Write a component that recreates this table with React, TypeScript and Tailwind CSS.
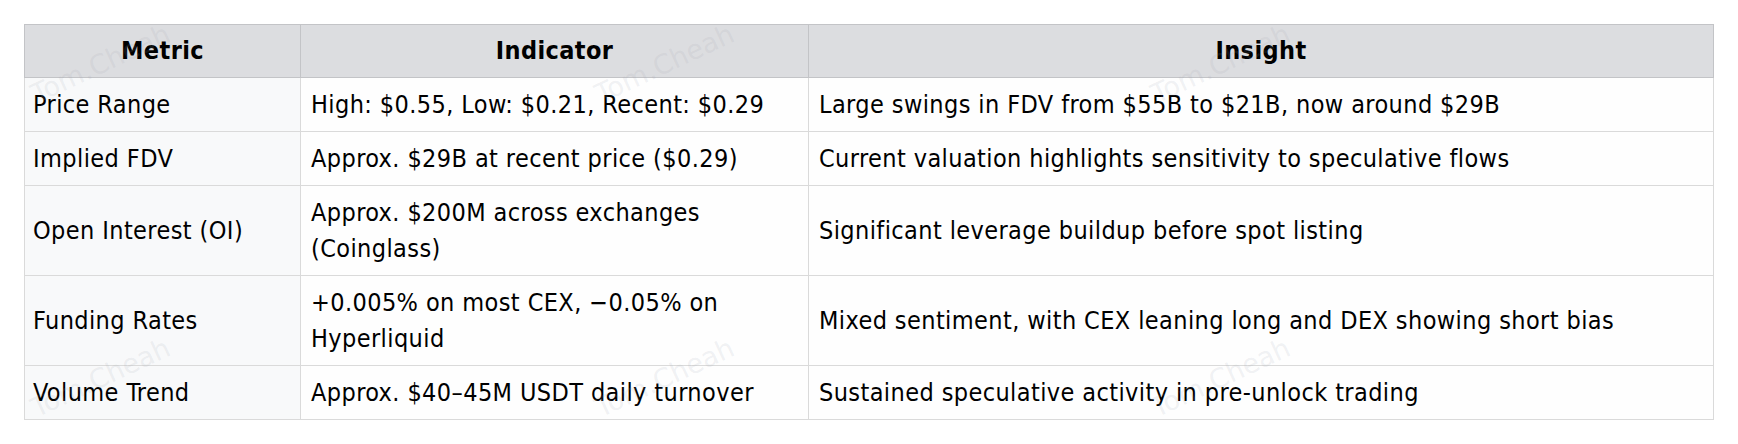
import React from 'react';

const rows = [
  {
    metric: 'Price Range',
    indicator: 'High: $0.55, Low: $0.21, Recent: $0.29',
    insight: 'Large swings in FDV from $55B to $21B, now around $29B',
  },
  {
    metric: 'Implied FDV',
    indicator: 'Approx. $29B at recent price ($0.29)',
    insight: 'Current valuation highlights sensitivity to speculative flows',
  },
  {
    metric: 'Open Interest (OI)',
    indicator: 'Approx. $200M across exchanges (Coinglass)',
    insight: 'Significant leverage buildup before spot listing',
  },
  {
    metric: 'Funding Rates',
    indicator: '+0.005% on most CEX, \u22120.05% on Hyperliquid',
    insight: 'Mixed sentiment, with CEX leaning long and DEX showing short bias',
  },
  {
    metric: 'Volume Trend',
    indicator: 'Approx. $40\u201345M USDT daily turnover',
    insight: 'Sustained speculative activity in pre-unlock trading',
  },
];

// faint rotated watermarks sitting over the table
const marks = [
  'left-[26px] top-[46px]',
  'left-[590px] top-[46px]',
  'left-[1146px] top-[46px]',
  'left-[26px] top-[360px]',
  'left-[590px] top-[360px]',
  'left-[1146px] top-[360px]',
];

const App = () => {
  return (
    <div className="relative min-h-[444px] w-[1738px] bg-white pt-6 pl-6 font-['DejaVu_Sans',sans-serif] font-stretch-condensed text-[25px] leading-[36px] tracking-[0.4px] text-black">
      <table className="w-[1690px] table-fixed border-collapse">
        <colgroup>
          <col className="w-[276px]" />
          <col className="w-[508px]" />
          <col />
        </colgroup>
        <thead>
          <tr className="bg-[#dcdde0]">
            <th className="border border-[#c3c4c7] px-2.5 py-2 text-center font-bold">Metric</th>
            <th className="border border-[#c3c4c7] px-2.5 py-2 text-center font-bold">Indicator</th>
            <th className="border border-[#c3c4c7] px-2.5 py-2 text-center font-bold">Insight</th>
          </tr>
        </thead>
        <tbody>
          {rows.map((row) => (
            <tr key={row.metric}>
              <td className="border border-[#dadada] bg-[#f8f9fa] py-[8.5px] pr-2.5 pl-2 align-middle">{row.metric}</td>
              <td className="border border-[#dadada] bg-[#fefefe] px-2.5 py-[8.5px] align-middle">{row.indicator}</td>
              <td className="border border-[#dadada] bg-[#fefefe] px-2.5 py-[8.5px] align-middle">{row.insight}</td>
            </tr>
          ))}
        </tbody>
      </table>

      {marks.map((pos) => (
        <span
          key={pos}
          className={`pointer-events-none absolute ${pos} -rotate-[25deg] font-stretch-normal text-[27px] tracking-normal text-[#9ca3af]/15 select-none`}
        >
          Tom.Cheah
        </span>
      ))}
    </div>
  );
};

export default App;
